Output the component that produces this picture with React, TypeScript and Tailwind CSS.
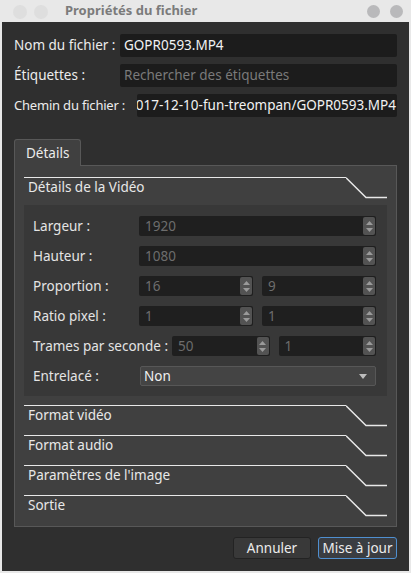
import React from "react";

const font = { fontFamily: '"Noto Sans", "DejaVu Sans", sans-serif' };

function Spin() {
  return (
    <div className="absolute right-[1px] top-[1px] bottom-[1px] w-[12px] rounded-[2px] bg-[#535353] flex flex-col items-center justify-center gap-[3px]">
      <svg width="7" height="4" viewBox="0 0 7 4"><path d="M0 4 L3.5 0 L7 4 Z" fill="#9a9a9a" /></svg>
      <svg width="7" height="4" viewBox="0 0 7 4"><path d="M0 0 L3.5 4 L7 0 Z" fill="#9a9a9a" /></svg>
    </div>
  );
}

function SpinBox({ value }: { value: string }) {
  return (
    <div className="relative flex-1 h-[20px] bg-[#1f1f1f] rounded-[2px] flex items-center pl-[6px] text-[13.5px] text-[#6d6d6d]">
      {value}
      <Spin />
    </div>
  );
}

function Row({ label, labelW, children }: { label: string; labelW: string; children: React.ReactNode }) {
  return (
    <div className="flex items-center h-[20px]">
      <div className={`${labelW} shrink-0 whitespace-nowrap text-[13.5px] text-[#e4e4e4]`}>{label}</div>
      <div className="flex-1 flex gap-[9px]">{children}</div>
    </div>
  );
}

function GroupHeader({ title }: { title: string }) {
  return (
    <div className="flex h-[22px]">
      <div className="flex-1 border-t-[1.5px] border-[#e8e8e8] pl-[4px] pt-[1px] text-[13.5px] text-[#e8e8e8] leading-[16px]">
        {title}
      </div>
      <svg width="41" height="22" viewBox="0 0 41 22" className="shrink-0">
        <polyline points="0,0.75 20,20.5 41,20.5" fill="none" stroke="#e8e8e8" strokeWidth="1.5" />
      </svg>
    </div>
  );
}

export default function App() {
  return (
    <div className="w-[411px] h-[573px] bg-[#e8e8e8] overflow-hidden" style={font}>
      {/* Title bar */}
      <div className="h-[22px] flex items-center relative">
        <div className="absolute left-[13px] top-[5px] w-[14px] h-[14px] rounded-full bg-[#dedede]" />
        <div className="absolute left-[34px] top-[5px] w-[14px] h-[14px] rounded-full bg-[#dedede]" />
        <div className="pl-[65px] text-[13px] font-bold text-[#7b7b7b]">Propriétés du fichier</div>
        <div className="absolute left-[367px] top-[5px] w-[13px] h-[13px] rounded-full bg-[#b9b9bb]" />
        <div className="absolute left-[390px] top-[5px] w-[13px] h-[13px] rounded-full bg-[#b9b9bb]" />
      </div>

      {/* Body */}
      <div className="ml-[2px] w-[407px] h-[549px] bg-[#2f2f2f] px-[12px] pt-[12px] flex flex-col">
        <div className="flex flex-col gap-[7px]">
          <div className="flex items-center h-[23px]">
            <div className="w-[106px] shrink-0 whitespace-nowrap text-[13.5px] text-[#ececec]">Nom du fichier :</div>
            <div className="flex-1 h-full bg-[#1c1c1c] rounded-[2px] flex items-center pl-[4px] text-[13.5px] text-[#f2f2f2]">GOPR0593.MP4</div>
          </div>
          <div className="flex items-center h-[23px]">
            <div className="w-[106px] shrink-0 whitespace-nowrap text-[13.5px] text-[#ececec]">Étiquettes :</div>
            <div className="flex-1 h-full bg-[#1c1c1c] rounded-[2px] flex items-center pl-[4px] text-[13.5px] text-[#7a7a7a]">Rechercher des étiquettes</div>
          </div>
          <div className="flex items-center h-[23px]">
            <div className="w-[123px] shrink-0 whitespace-nowrap text-[13px] tracking-[-0.2px] text-[#ececec]">Chemin du fichier :</div>
            <div className="flex-1 min-w-0 h-full bg-[#1c1c1c] rounded-[2px] relative overflow-hidden text-[13.5px] text-[#f2f2f2] whitespace-nowrap">
              <span className="absolute right-[1px] top-0 bottom-0 flex items-center">2017-12-10-fun-treompan/GOPR0593.MP4</span>
            </div>
          </div>
        </div>

        {/* Tabs */}
        <div className="mt-[22px] flex">
          <div className="w-[67px] h-[27px] bg-[#404040] border border-b-0 border-[#585858] rounded-t-[3px] flex items-center pl-[11px] text-[13.5px] text-[#ececec] relative z-10 -mb-[1px]">
            Détails
          </div>
        </div>
        <div className="h-[362px] bg-[#404040] border border-[#585858] px-[9px] pt-[11px] flex flex-col">
          <GroupHeader title="Détails de la Vidéo" />
          <div className="mt-[6px] bg-[#383838] pl-[9px] pr-[11px] pt-[11px] pb-[10px] flex flex-col gap-[10px]">
            <Row label="Largeur :" labelW="w-[106px]"><SpinBox value="1920" /></Row>
            <Row label="Hauteur :" labelW="w-[106px]"><SpinBox value="1080" /></Row>
            <Row label="Proportion :" labelW="w-[106px]"><SpinBox value="16" /><SpinBox value="9" /></Row>
            <Row label="Ratio pixel :" labelW="w-[106px]"><SpinBox value="1" /><SpinBox value="1" /></Row>
            <Row label="Trames par seconde :" labelW="w-[139px]"><SpinBox value="50" /><SpinBox value="1" /></Row>
            <Row label="Entrelacé :" labelW="w-[107px]">
              <div className="flex-1 h-[20px] bg-[#444444] border border-[#575757] rounded-[2px] flex items-center pl-[3px] pr-[8px] text-[13.5px] text-[#f0f0f0]">
                <span className="flex-1">Non</span>
                <svg width="8" height="5" viewBox="0 0 8 5"><path d="M0 0 L8 0 L4 5 Z" fill="#bdbdbd" /></svg>
              </div>
            </Row>
          </div>
          <div className="mt-[9px] flex flex-col gap-[8px]">
            <GroupHeader title="Format vidéo" />
            <GroupHeader title="Format audio" />
            <GroupHeader title="Paramètres de l'image" />
            <GroupHeader title="Sortie" />
          </div>
        </div>

        {/* Buttons */}
        <div className="mt-[10px] flex justify-end gap-[7px]">
          <div className="w-[78px] h-[22px] bg-[#393939] border border-[#232323] rounded-[3px] flex items-center justify-center text-[13.5px] text-[#ececec]">Annuler</div>
          <div className="w-[79px] h-[22px] bg-[#3a3d42] border border-[#4f8fd0] rounded-[3px] flex items-center justify-center text-[13.5px] text-[#ececec]">Mise à jour</div>
        </div>
      </div>
    </div>
  );
}
